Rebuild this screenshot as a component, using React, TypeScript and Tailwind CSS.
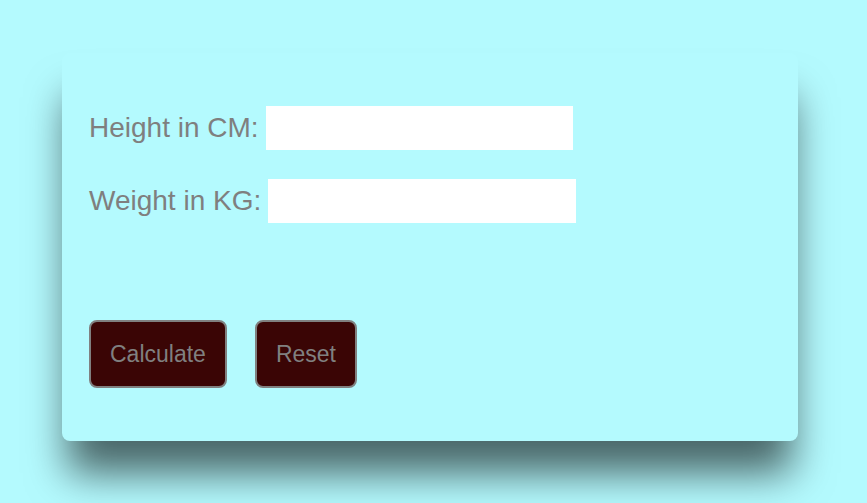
export default function App() {
  return (
    <div className="min-h-[503px] w-full bg-[#b4fafe] pt-[53px] font-['Liberation_Sans',Arial,sans-serif]">
      <div className="ml-[62px] w-[736px] rounded-lg bg-[#b4fafe] px-[27px] pt-[53px] pb-[53px] shadow-[0_38px_40px_-6px_rgba(0,0,0,0.6)]">
        <div className="flex items-center text-[28px] text-[#7f7f7f]">
          <label className="mr-[7px] leading-none">Height in CM:</label>
          <input className="h-[44px] w-[307px] bg-white outline-none" />
        </div>
        <div className="mt-[29px] flex items-center text-[28px] text-[#7f7f7f]">
          <label className="mr-[7px] leading-none">Weight in KG:</label>
          <input className="h-[44px] w-[308px] bg-white outline-none" />
        </div>
        <div className="mt-[97px] flex gap-[28px]">
          <button className="h-[68px] rounded-lg border-2 border-[#808080] bg-[#3a0505] px-[19px] text-[23px] text-[#808080]">
            Calculate
          </button>
          <button className="h-[68px] rounded-lg border-2 border-[#808080] bg-[#3a0505] px-[19px] text-[23px] text-[#808080]">
            Reset
          </button>
        </div>
      </div>
    </div>
  );
}
